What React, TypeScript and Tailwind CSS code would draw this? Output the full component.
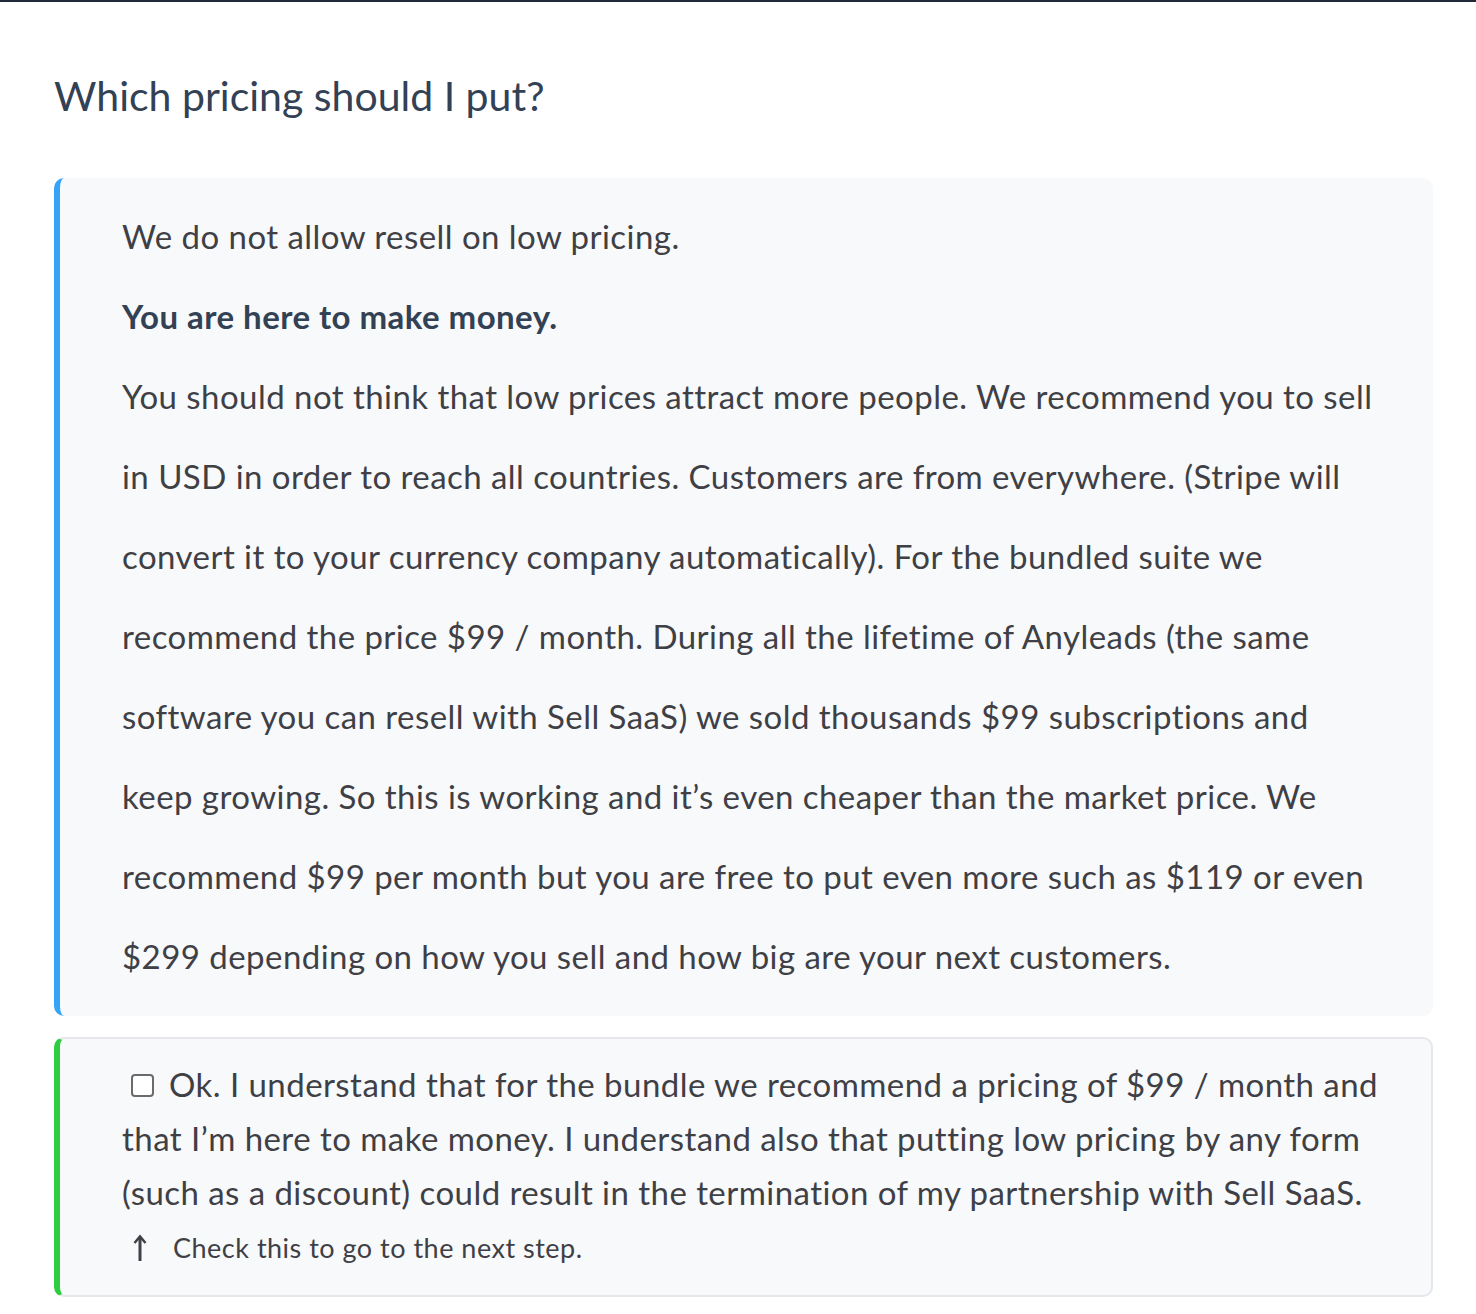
export default function App() {
  const font = { fontFamily: "Lato, 'Noto Sans', sans-serif" };
  return (
    <div className="min-h-screen bg-white border-t-2 border-[#1f2937]" style={font}>
      <div className="pl-[54px] pr-[43px] pt-[64px] pb-4">
        <h1 className="text-[41px] leading-[60px] text-[#334155] font-normal mb-[52px]">
          Which pricing should I put?
        </h1>

        <div className="rounded-[10px] bg-[#f8f9fb] border-l-[6px] border-[#35a3f7] pl-[62px] pr-6 pt-[18px] pb-5 text-[33px] tracking-[0.45px] leading-[80px] text-[#3f3f46]">
          <p>We do not allow resell on low pricing.</p>
          <p className="font-bold text-[#334155]">You are here to make money.</p>
          <p>
            <span className="block whitespace-nowrap">You should not think that low prices attract more people. We recommend you to sell</span>
            <span className="block whitespace-nowrap">in USD in order to reach all countries. Customers are from everywhere. (Stripe will</span>
            <span className="block whitespace-nowrap">convert it to your currency company automatically). For the bundled suite we</span>
            <span className="block whitespace-nowrap">recommend the price $99 / month. During all the lifetime of Anyleads (the same</span>
            <span className="block whitespace-nowrap">software you can resell with Sell SaaS) we sold thousands $99 subscriptions and</span>
            <span className="block whitespace-nowrap">keep growing. So this is working and it’s even cheaper than the market price. We</span>
            <span className="block whitespace-nowrap">recommend $99 per month but you are free to put even more such as $119 or even</span>
            <span className="block whitespace-nowrap">$299 depending on how you sell and how big are your next customers.</span>
          </p>
        </div>

        <div className="mt-[21px] rounded-[10px] bg-[#f8f9fb] border-2 border-[#e5e7eb] border-l-[6px] border-l-[#2ecc40] pl-[62px] pr-6 pt-[18px] pb-[18px] text-[33px] tracking-[0.45px] leading-[54px] text-[#3f3f46]">
          <label className="block">
            <span className="block whitespace-nowrap">
              <input type="checkbox" className="appearance-none align-middle relative -top-[3px] ml-[9px] mr-[15px] w-[23px] h-[23px] rounded-[4px] border-2 border-[#6b6b6b] bg-white" />
              Ok. I understand that for the bundle we recommend a pricing of $99 / month and
            </span>
            <span className="block whitespace-nowrap">that I’m here to make money. I understand also that putting low pricing by any form</span>
            <span className="block whitespace-nowrap">(such as a discount) could result in the termination of my partnership with Sell SaaS.</span>
          </label>
          <div className="flex items-center text-[27px] tracking-[0.5px] leading-[58px] text-[#3f3f46]">
            <svg className="ml-[11px] mr-[26px]" width="14" height="28" viewBox="0 0 14 28" fill="none">
              <path d="M7 27V3" stroke="#3f3f46" strokeWidth="3" />
              <path d="M1.5 9L7 2.5L12.5 9" stroke="#3f3f46" strokeWidth="2.5" strokeLinejoin="miter" />
            </svg>
            <span>Check this to go to the next step.</span>
          </div>
        </div>
      </div>
    </div>
  );
}
